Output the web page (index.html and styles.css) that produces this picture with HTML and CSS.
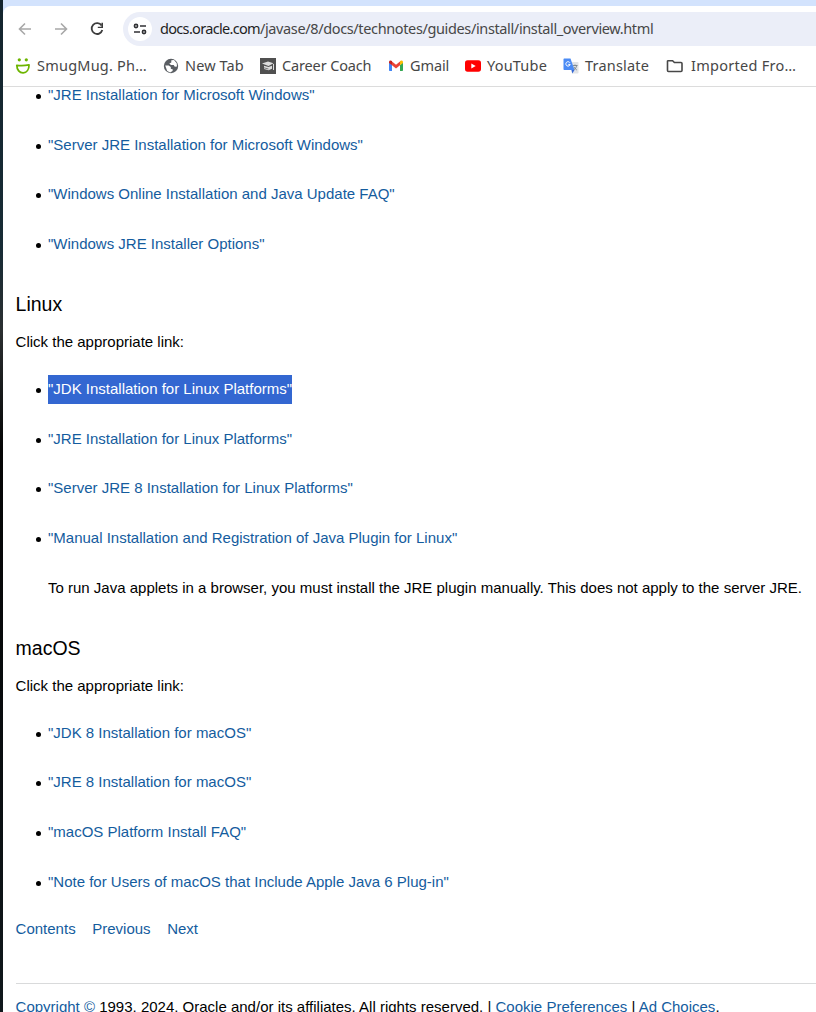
FILE: index.html
```html
<!DOCTYPE html>
<html lang="en">
<head>
<meta charset="utf-8">
<title>JDK 8 and JRE 8 Installation Start Here</title>
<link rel="stylesheet" href="styles.css">
</head>
<body>
<div class="desktop">
  <div class="window">
    <header class="chrome">
      <div class="toolbar">
        <svg class="nav back" width="16" height="16" viewBox="0 0 16 16"><path d="M14 8H3M8 2.5 2.5 8 8 13.5"/></svg>
        <svg class="nav forward" width="16" height="16" viewBox="0 0 16 16"><path d="M2 8h11M8 2.5 13.5 8 8 13.5"/></svg>
        <svg class="nav reload" width="16" height="16" viewBox="0 0 16 16"><path d="M12.6 4.6A5.4 5.4 0 1 0 13.3 9"/><path class="solid" d="M14 1.800v5.300H8.800V5.700h3.600V1.800z"/></svg>
        <div class="address">
          <span class="site"><svg width="14" height="12" viewBox="0 0 14 12"><circle cx="3" cy="3" r="1.6"/><path d="M7 3h6M1 9h6"/><circle cx="11" cy="9" r="1.6"/></svg></span>
          <span class="url"><b>docs.oracle.com</b>/javase/8/docs/technotes/guides/install/install_overview.html</span>
        </div>
      </div>
      <nav class="bookmarks">
        <a class="bm smug"><svg width="16" height="16" viewBox="0 0 16 16"><circle cx="4.300" cy="1.800" r="1.600" fill="#6db500"/><circle cx="11.300" cy="1.800" r="1.600" fill="#6db500"/><path d="M1.800 7.300c4 .5 8 .4 12.200-.4.1 4.600-2.400 7.800-5.800 8C4.600 15 1.900 12 1.800 7.300Z" fill="none" stroke="#6db500" stroke-width="1.800" stroke-linejoin="round"/></svg><span>SmugMug. Ph…</span></a>
        <a class="bm newtab"><svg width="16" height="16" viewBox="0 0 16 16"><circle cx="8" cy="8" r="7.200" fill="#5a5e63"/><path d="M8.300 2.300 11 2l2.700 3.200.3 3.300-2.200.2-1.100-1.800H8L6.300 5.500l2-1zM2.200 7.500h3.500l2.100 1.400v1.800l2.100.7-.4 1.700-2.300 1.300-3-1.300z" fill="#fff"/></svg><span>New Tab</span></a>
        <a class="bm career"><svg width="16" height="16" viewBox="0 0 16 16"><path d="M0 0h16v16H0z" fill="#505050"/><path d="M2 5.500 8 3.600l5.500 1.700L8.500 8zM4 7.800l4.500 1.300L12 7.800v3L8.500 12.300 4 11zM13 6h1v6h-1z" fill="#ddd"/><path d="M4 9.800l4.500 1.200" stroke="#505050" stroke-width=".7"/></svg><span>Career Coach</span></a>
        <a class="bm gmail"><svg width="16" height="16" viewBox="0 0 16 16"><path d="M1 4.500 4 7v6H2c-.6 0-1-.4-1-1z" fill="#4285f4"/><path d="M15 4.500 12 7v6h2c.6 0 1-.4 1-1z" fill="#34a853"/><path d="M4 3.600 8 6.800l4-3.200v3.700l-4 3.200-4-3.200z" fill="#ea4335"/><path d="M1 5V4c0-1.600 1.700-2.100 3-1v4.300z" fill="#c5221f"/><path d="M15 5V4c0-1.600-1.700-2.100-3-1v4.300z" fill="#fbbc04"/></svg><span>Gmail</span></a>
        <a class="bm youtube"><svg width="16" height="16" viewBox="0 0 16 16"><rect y="2.300" width="16" height="11.400" rx="2.600" fill="#f00"/><path d="M6.300 5.500v5L10.700 8z" fill="#fff"/></svg><span>YouTube</span></a>
        <a class="bm translate"><svg width="16" height="16" viewBox="0 0 16 16"><path d="M6 4h8.500c.6 0 1 .4 1 1v9.500c0 .6-.4 1-1 1H9z" fill="#e1e3e6"/><path d="M8.500 12h3l-2.200 3.400z" fill="#3367d6"/><path d="M1.500.5h6L11.500 12h-10c-.6 0-1-.4-1-1V1.500c0-.6.400-1 1-1z" fill="#4b8bf5"/><path d="M6.900 4.700A2.200 2.200 0 1 0 7.200 6.400H5.300" fill="none" stroke="#fff"/><path d="M10 7.500h4.500M12 6.500v1M13.700 7.500c-.4 2-1.400 3.300-2.800 4.300M10.900 8.800c.7 1.400 1.700 2.500 3 3.300" fill="none" stroke="#6f7b83" stroke-width=".8"/></svg><span>Translate</span></a>
        <a class="bm imported"><svg width="18" height="16" viewBox="0 0 18 16"><path d="M2 2.700h4.600l1.800 1.800H15c.6 0 1 .4 1 1v7c0 .6-.4 1-1 1H2.500c-.6 0-1-.4-1-1V3.200z" fill="none" stroke="#474747" stroke-width="1.600"/></svg><span>Imported Fro…</span></a>
      </nav>
    </header>
    <main class="page">
      <ul class="links first">
        <li><a>"JRE Installation for Microsoft Windows"</a></li>
        <li><a>"Server JRE Installation for Microsoft Windows"</a></li>
        <li><a>"Windows Online Installation and Java Update FAQ"</a></li>
        <li><a>"Windows JRE Installer Options"</a></li>
      </ul>
      <h2>Linux</h2>
      <p class="intro">Click the appropriate link:</p>
      <ul class="links">
        <li><a class="selected">"JDK Installation for Linux Platforms"</a></li>
        <li><a>"JRE Installation for Linux Platforms"</a></li>
        <li><a>"Server JRE 8 Installation for Linux Platforms"</a></li>
        <li><a>"Manual Installation and Registration of Java Plugin for Linux"</a>
          <p class="note">To run Java applets in a browser, you must install the JRE plugin manually. This does not apply to the server JRE.</p></li>
      </ul>
      <h2>macOS</h2>
      <p class="intro mac">Click the appropriate link:</p>
      <ul class="links">
        <li><a>"JDK 8 Installation for macOS"</a></li>
        <li><a>"JRE 8 Installation for macOS"</a></li>
        <li><a>"macOS Platform Install FAQ"</a></li>
        <li><a>"Note for Users of macOS that Include Apple Java 6 Plug-in"</a></li>
      </ul>
      <div class="pager"><a>Contents</a><a>Previous</a><a>Next</a></div>
      <footer class="legal"><a>Copyright ©</a> 1993, 2024, Oracle and/or its affiliates. All rights reserved. | <a>Cookie Preferences</a> | <a>Ad Choices</a>.</footer>
    </main>
  </div>
</div>
</body>
</html>
```
FILE: styles.css
```css
* { box-sizing: border-box; }
body { margin: 0; }
.desktop {
  height: 1012px;
  padding-left: 3px;
  overflow: hidden;
  background: linear-gradient(#14252e 0, #172b35 250px, #2b2f31 330px, #050505 450px, #080b0d 700px, #10181c 1012px);
}
.window { height: 1012px; display: flex; flex-direction: column; background: #fff; }
.chrome {
  height: 87px;
  flex: none;
  background: #d3e3fd;
  padding-top: 6px;
  border-bottom: 1px solid #dcdcdc;
  font-family: "Noto Sans", "Open Sans", sans-serif;
}
.toolbar {
  height: 46px;
  display: flex;
  align-items: center;
  padding-left: 14px;
  background: #fff;
  border-top-left-radius: 8px;
}
.nav { flex: none; margin-right: 20px; fill: none; stroke: #a8a8a8; stroke-width: 1.6; }
.nav.reload { margin-right: 18px; stroke: #3c3c3c; stroke-width: 1.8; }
.nav .solid { fill: #3c3c3c; stroke: none; }
.address {
  flex: 1;
  height: 34px;
  display: flex;
  align-items: center;
  padding-left: 5px;
  border-radius: 17px 0 0 17px;
  background: #ebeef8;
}
.site {
  width: 24px;
  height: 24px;
  display: flex;
  align-items: center;
  justify-content: center;
  margin-right: 8px;
  border-radius: 50%;
  background: #fff;
}
.site svg { fill: none; stroke: #303134; stroke-width: 1.6; }
.url { padding-bottom: 2px; font-size: 14.5px; letter-spacing: -0.37px; white-space: nowrap; color: #474747; }
.url b { font-weight: 400; letter-spacing: -0.68px; color: #1f1f1f; }
.bookmarks { height: 34px; display: flex; background: #fff; padding-left: 12px; }
.bm {
  flex: none;
  height: 28px;
  display: flex;
  align-items: center;
  gap: 6px;
  font-size: 14.5px;
  color: #474747;
  white-space: nowrap;
}
.bm span { padding-bottom: 2px; }
.smug { width: 148px; letter-spacing: 0.22px; }
.newtab { width: 97px; letter-spacing: 0.12px; }
.career { width: 128px; letter-spacing: -0.14px; }
.gmail { width: 77px; letter-spacing: -0.1px; }
.youtube { width: 98px; letter-spacing: 0.2px; }
.translate { width: 103px; letter-spacing: 0.2px; }
.imported { gap: 7px; letter-spacing: 0.28px; }
.page {
  flex: 1;
  overflow: hidden;
  padding-left: 12.6px;
  font: 15px/29px "Liberation Sans", Arial, sans-serif;
  color: #000;
  white-space: nowrap;
}
.page a { color: #145c9e; }
.links { margin: 0; padding-left: 32.4px; list-style: none; line-height: 27px; }
.first { margin-top: -6px; }
.links li { margin-bottom: 22.7px; }
.links li::before {
  content: "";
  display: inline-block;
  width: 5px;
  height: 5px;
  margin: 0 7px 1px -12px;
  border-radius: 50%;
  background: #000;
}
.links .selected.selected {
  display: inline-block;
  height: 29px;
  margin-bottom: -2px;
  background: #3367d1;
  color: #fff;
  vertical-align: top;
}
.note { margin: 22.7px 0 0; }
h2 { margin: 33.2px 0 0; font-size: 19.5px; line-height: 28px; font-weight: 400; }
.intro { margin: 9px 0 18.6px; }
.intro.mac { margin-bottom: 18.95px; }
.pager { display: flex; gap: 16.6px; margin-top: -3.35px; }
.legal { margin-top: 39.5px; padding-top: 8px; border-top: 1px solid #d9dadb; }
```
